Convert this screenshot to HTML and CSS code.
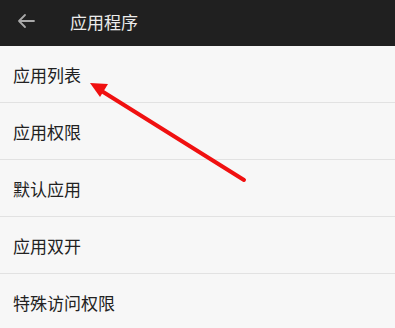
FILE: index.html
```html
<!DOCTYPE html>
<html lang="zh">
<head>
<meta charset="utf-8">
<link rel="stylesheet" href="styles.css">
</head>
<body>
<div class="page">
  <header class="topbar">
    <svg class="back" width="18" height="16" viewBox="0 0 18 16">
      <path d="M17 8H2M8 2L2 8l6 6" fill="none" stroke="#a9a9a9" stroke-width="1.8" stroke-linecap="round" stroke-linejoin="round"/>
    </svg>
    <span class="title">应用程序</span>
  </header>
  <ul class="list">
    <li class="row">应用列表</li>
    <li class="row">应用权限</li>
    <li class="row">默认应用</li>
    <li class="row">应用双开</li>
    <li class="row">特殊访问权限</li>
  </ul>
  <svg class="annot" width="395" height="328" viewBox="0 0 395 328">
    <line x1="244" y1="180" x2="100" y2="90" stroke="#f01010" stroke-width="4" stroke-linecap="round"/>
    <polygon points="90,83 108,84 100,97" fill="#f01010"/>
  </svg>
</div>
</body>
</html>
```

FILE: styles.css
```css
html, body {
  margin: 0;
  padding: 0;
  background: #f7f7f7;
}
body {
  font-family: "Noto Sans CJK SC", "Noto Sans", sans-serif;
}
.page {
  position: relative;
  width: 395px;
  height: 328px;
  overflow: hidden;
}
.topbar {
  height: 46px;
  background: #202020;
  display: flex;
  align-items: center;
  padding-left: 17px;
  box-sizing: border-box;
}
.back {
  display: block;
  margin-top: -4px;
}
.title {
  color: #ececec;
  font-size: 17px;
  margin-left: 35px;
  margin-top: -3px;
}
.list {
  list-style: none;
  margin: 0;
  padding: 0;
}
.row {
  height: 56px;
  border-bottom: 1px solid #e2e2e2;
  display: flex;
  align-items: center;
  padding-left: 13px;
  font-size: 17px;
  color: #222;
}
.annot {
  position: absolute;
  left: 0;
  top: 0;
  pointer-events: none;
}
```
